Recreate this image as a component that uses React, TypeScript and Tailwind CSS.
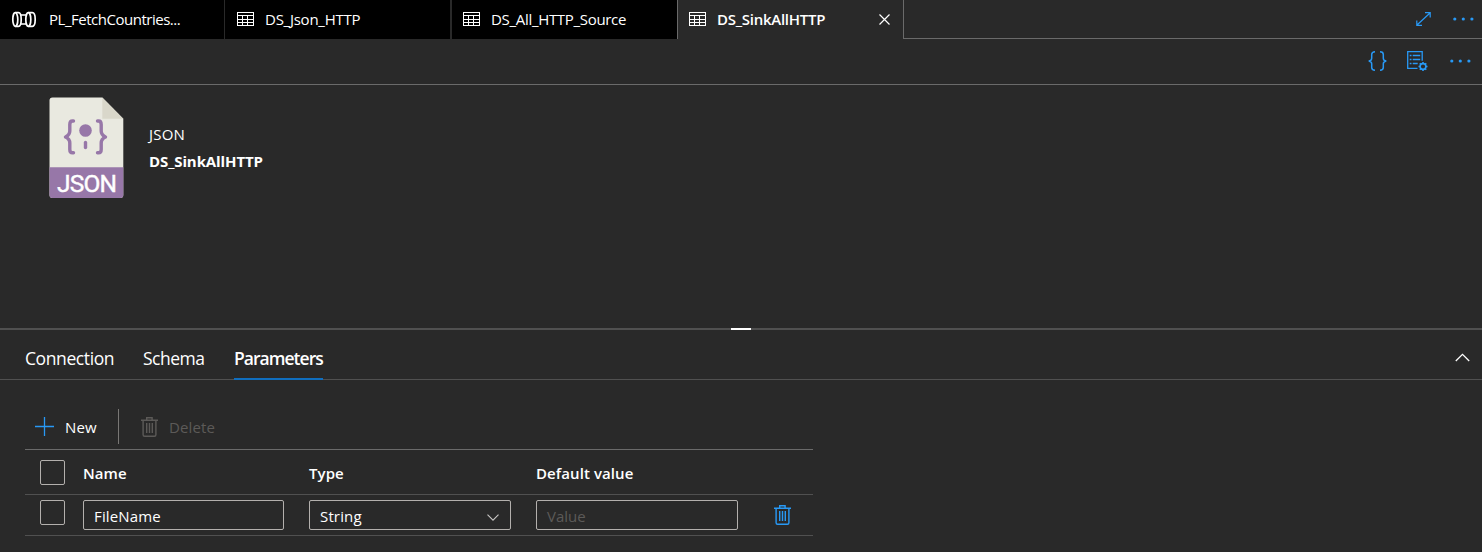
import React from "react";

const BLUE = "#2899f5";

function PipelineIcon() {
  return (
    <svg width="26" height="17" viewBox="0 0 26 17" fill="none" stroke="#fff" strokeWidth="1.7">
      <ellipse cx="4.3" cy="8.5" rx="2.5" ry="6.800" />
      <path d="M4.300 1.700H7.500C9.300 1.700 10.200 5 10.200 8.500S9.300 15.300 7.500 15.300H4.300" />
      <path d="M9.800 4h6M9.800 13h6" />
      <ellipse cx="17.300" cy="8.500" rx="2.500" ry="6.800" />
      <path d="M17.300 1.700h4c1.800 0 2.900 3.300 2.900 6.800s-1.100 6.800-2.900 6.800h-4" />
    </svg>
  );
}

function TableIcon() {
  return (
    <svg width="17" height="14" viewBox="0 0 17 14" fill="none" stroke="#fff" shapeRendering="crispEdges" className="-mt-px">
      <path d="M.5 .5h16v13H.5zM.5 3.500h16M.5 7.500h16M.5 10.500h16M5.500 3.500v10M10.500 3.500v10" />
    </svg>
  );
}

function TrashIcon({ color }: { color: string }) {
  return (
    <svg width="17" height="20" viewBox="0 0 17 20" fill="none" stroke={color} strokeWidth="1.4">
      <path d="M0 3.300h17M5.700 3.300V.8h5.400v2.500M2.100 3.300v14.400q0 1.500 1.500 1.500h9.800q1.500 0 1.500-1.500V3.300" />
      <path d="M5.700 6v10M8.500 6v10M11.300 6v10" />
    </svg>
  );
}

function Dots() {
  return (
    <svg width="21" height="4" viewBox="0 0 21 4" fill={BLUE}>
      <circle cx="1.800" cy="2" r="1.600" />
      <circle cx="10.300" cy="2" r="1.600" />
      <circle cx="18.900" cy="2" r="1.600" />
    </svg>
  );
}

function JsonFile() {
  return (
    <svg width="75" height="102" viewBox="0 0 75 102">
      <path d="M3.500.5h49.800l21 21.300v76.200q0 3-3 3H3.500q-3 0-3-3V3.500q0-3 3-3z" fill="#e9e9e0" />
      <path d="M53.300.5v21.300h21z" fill="#d9d7ca" />
      <path d="M.5 70.200h73.800V98q0 3-3 3H3.500q-3 0-3-3z" fill="#9777a8" />
      <g fill="none" stroke="#9777a8" strokeWidth="3.400" strokeLinecap="round" strokeLinejoin="round">
        <path d="M24.500 24h-1q-2.700 0-2.700 3.500v6.500q0 4-4.300 6 4.300 2 4.300 6v6.500q0 3.300 2.700 3.300h1" />
        <path d="M48.500 24h1q2.700 0 2.700 3.500v6.500q0 4 4.300 6-4.300 2-4.300 6v6.500q0 3.300-2.700 3.300h-1" />
        <path d="M36.500 45.500v5" />
      </g>
      <circle cx="36.500" cy="33.500" r="6.300" fill="#9777a8" />
      <text x="8" y="95.300" textLength="60" lengthAdjust="spacing" fill="#fff" stroke="#fff" strokeWidth=".4" fontSize="24.500" fontFamily="Roboto, sans-serif">JSON</text>
    </svg>
  );
}

function Tab({ children, label, className }: { children: React.ReactNode; label: React.ReactNode; className: string }) {
  return (
    <div className={`flex h-[39px] shrink-0 items-center ${className}`}>
      {children}
      {label}
    </div>
  );
}

function Box({ className = "" }: { className?: string }) {
  return <div className={`size-[25px] shrink-0 rounded-[2px] border border-[#b3b0ad] ${className}`} />;
}

export default function App() {
  return (
    <div className="flex h-[552px] w-[1482px] flex-col overflow-hidden bg-[#292929] font-['Open_Sans',sans-serif] text-[15px] leading-5 whitespace-nowrap text-white">
      <div className="flex h-[39px] shrink-0">
        <Tab className="w-[225px] border-r border-[#292929] bg-black pl-[11px]" label={<span className="ml-3 pb-0.5 tracking-[-0.48px]">PL_FetchCountries...</span>}>
          <PipelineIcon />
        </Tab>
        <Tab className="w-[227px] border-r-2 border-[#292929] bg-black pl-3" label={<span className="ml-[11px] pb-0.5 tracking-[-0.25px]">DS_Json_HTTP</span>}>
          <TableIcon />
        </Tab>
        <Tab className="w-[226px] border-r border-[#6a6a6a] bg-black pl-[11px]" label={<span className="ml-[11px] pb-0.5 tracking-[-0.31px]">DS_All_HTTP_Source</span>}>
          <TableIcon />
        </Tab>
        <Tab
          className="w-[226px] border-r border-[#6a6a6a] pl-[11px]"
          label={
            <>
              <span className="ml-[11px] w-[163px] pb-0.5 font-semibold tracking-[-0.27px]">DS_SinkAllHTTP</span>
              <svg width="11" height="11" viewBox="0 0 11 11" stroke="#fff" strokeWidth="1.200" className="-mt-px shrink-0 -ml-px">
                <path d="m.5.500 10 10M10.500.500l-10 10" />
              </svg>
            </>
          }
        >
          <TableIcon />
        </Tab>
        <div className="flex flex-1 items-center justify-end border-b border-[#6a6a6a] pr-2">
          <svg width="15" height="14" viewBox="0 0 15 14" fill="none" stroke={BLUE} strokeWidth="1.200" className="mr-[22px]">
            <path d="M1 13 14 1M9 .7h5.200V5.500M.8 8.500v4.800H6" />
          </svg>
          <Dots />
        </div>
      </div>
      <div className="flex h-[46px] shrink-0 items-center justify-end border-b border-[#6a6a6a] pr-[11px] pb-px">
        <svg width="19" height="20" viewBox="0 0 19 20" fill="none" stroke={BLUE} strokeWidth="1.500">
          <path d="M7 .8Q3.700.8 3.700 3.500V7.200Q3.700 9.600.7 10q3 .4 3 2.800v3.700q0 2.700 3.300 2.700M12 .8q3.300 0 3.300 2.700V7.200q0 2.400 3 2.800-3 .4-3 2.800v3.700q0 2.700-3.300 2.700" />
        </svg>
        <svg width="21" height="20" viewBox="0 0 21 20" fill="none" stroke={BLUE} strokeWidth="1.300" className="mr-[22px] ml-[20px]">
          <path d="M10.500 17.400H.7V.7h14.500v9M2.700 4.500h1.800M5.700 4.500h7.500M2.700 8.500h1.800M5.700 8.500h7.500M2.700 12.500h1.800M5.700 12.500h5" />
          <circle cx="16" cy="15.500" r="2.900" strokeWidth="1.600" />
          <path d="M16 11v1.500M16 18.500V20M11.500 15.500H13M19 15.500h1.500M12.800 12.300l1.200 1.200M18 17.500l1.200 1.200M12.800 18.700l1.200-1.200M18 13.500l1.200-1.200" strokeWidth="1.600" />
        </svg>
        <Dots />
      </div>
      <div className="flex h-[243px] shrink-0 pt-3 pl-[49px]">
        <JsonFile />
        <div className="ml-[25px] pt-[27px]">
          <div className="tracking-[0.2px]">JSON</div>
          <div className="mt-[7px] font-bold tracking-[-0.1px]">DS_SinkAllHTTP</div>
        </div>
      </div>
      <div className="flex h-[2px] shrink-0 bg-[#505050] pl-[731px]">
        <div className="w-5 bg-white" />
      </div>
      <div className="flex h-[50px] shrink-0 border-b border-[#505050] pl-[25px] text-[17.500px]">
        <div className="w-[118px] pt-[18px] tracking-[-0.4px]">Connection</div>
        <div className="w-[91px] pt-[18px] tracking-[-0.5px]">Schema</div>
        <div className="h-[50px] w-[89px] border-b-2 border-[#106ebe] pt-[18px] font-semibold tracking-[-0.97px]">Parameters</div>
        <svg width="15" height="9" viewBox="0 0 15 9" fill="none" stroke="#fff" strokeWidth="1.300" className="mt-[23px] mr-3 ml-auto">
          <path d="m.8 8 6.700-6.700L14.200 8" />
        </svg>
      </div>
      <div className="ml-[25px] flex w-[788px] flex-col pt-[29px]">
        <div className="flex h-[41px] border-b border-[#6a6a6a]">
          <div className="flex h-[35px] w-[94px] items-center border-r border-[#797775] pl-[10px]">
            <svg width="19" height="19" viewBox="0 0 19 19" stroke={BLUE} strokeWidth="1.300">
              <path d="M0 9.500h19M9.500 0v19" />
            </svg>
            <span className="ml-[11px] tracking-[0.2px]">New</span>
          </div>
          <div className="flex h-[35px] items-center pl-[22px] text-[#5c5a58]">
            <TrashIcon color="#5c5a58" />
            <span className="ml-[11px] tracking-[0.15px]">Delete</span>
          </div>
        </div>
        <div className="flex h-[45px] border-b border-[#505050] pt-[10px] pl-[15px] font-semibold tracking-[0.08px]">
          <Box className="mr-[18px]" />
          <div className="w-[226px] pt-[3px]">Name</div>
          <div className="w-[227px] pt-[3px]">Type</div>
          <div className="pt-[3px]">Default value</div>
        </div>
        <div className="flex h-[41px] border-b border-[#505050] pt-[5px] pl-[15px]">
          <Box className="mr-[18px]" />
          <div className="mr-[25px] flex h-[30px] w-[201px] items-center rounded-[2px] border border-[#b3b0ad] pt-0.5 pl-[10px] tracking-[0.15px]">FileName</div>
          <div className="mr-[25px] flex h-[30px] w-[202px] items-center justify-between rounded-[2px] border border-[#b3b0ad] pr-[11px] pl-[10px]">
            <span className="pt-0.5 tracking-[0.15px]">String</span>
            <svg width="12" height="7" viewBox="0 0 12 7" fill="none" stroke="#c8c6c4" strokeWidth="1.100" className="mt-1">
              <path d="m.5.700 5.500 5.500L11.500.700" />
            </svg>
          </div>
          <div className="flex h-[30px] w-[202px] items-center rounded-[2px] border border-[#b3b0ad] pt-0.5 pl-[10px] text-[#5c5a58]">Value</div>
          <div className="mt-[5px] ml-9">
            <TrashIcon color={BLUE} />
          </div>
        </div>
      </div>
    </div>
  );
}
